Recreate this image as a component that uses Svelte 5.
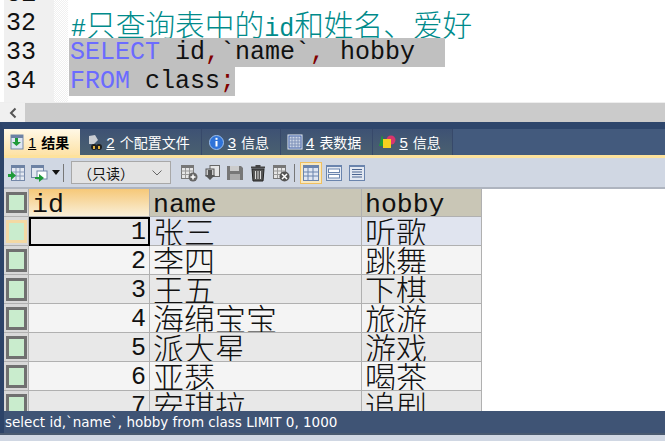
<script>
    const tabs = [
        { num: '1', label: '结果', icon: 'result', active: true },
        { num: '2', label: '个配置文件', icon: 'profile' },
        { num: '3', label: '信息', icon: 'info' },
        { num: '4', label: '表数据', icon: 'table' },
        { num: '5', label: '信息', icon: 'shapes' }
    ];

    const rows = [
        { id: 1, name: '张三', hobby: '听歌' },
        { id: 2, name: '李四', hobby: '跳舞' },
        { id: 3, name: '王五', hobby: '下棋' },
        { id: 4, name: '海绵宝宝', hobby: '旅游' },
        { id: 5, name: '派大星', hobby: '游戏' },
        { id: 6, name: '亚瑟', hobby: '喝茶' },
        { id: 7, name: '安琪拉', hobby: '追剧' }
    ];
</script>

<div class="page">
    <div class="editor">
        <div class="gutter">
            <div class="nums">
                <div>31</div>
                <div>32</div>
                <div>33</div>
                <div>34</div>
            </div>
            <div class="fold"></div>
        </div>
        <div class="code">
            <div class="line"></div>
            <div class="line comment">#<span class="cjk">只查询表中的</span>id<span class="cjk">和姓名、爱好</span></div>
            <div class="line"><span class="sel"><span class="kw">SELECT</span> id<span class="punct">,</span>`name`<span class="punct">,</span> hobby&nbsp;&nbsp;</span></div>
            <div class="line"><span class="sel"><span class="kw">FROM</span> class<span class="punct">;</span></span></div>
        </div>
    </div>

    <div class="hscroll">
        <div class="scroll-btn">
            <svg width="10" height="12" viewBox="0 0 10 12"><path d="M7.500 1.500 3 6l4.500 4.500" fill="none" stroke="#555" stroke-width="2" /></svg>
        </div>
    </div>

    <div class="results">
        <div class="tabs">
            {#each tabs as t}
                <div class="tab" class:active={t.active}>
                    {#if t.icon === 'result'}
                        <svg width="15" height="17" viewBox="0 0 15 17">
                            <rect x="1" y="1" width="12" height="14" fill="#dfe6f2" stroke="#7387a8" />
                            <rect x="1" y="1" width="12" height="3" fill="#6d82a4" />
                            <path d="M5 4h3v4h3l-4.500 4L2 8h3z" fill="#1f9a3a" />
                        </svg>
                    {:else if t.icon === 'profile'}
                        <svg width="17" height="17" viewBox="0 0 17 17">
                            <path d="M3 2 9 1l3 5-4 4H3z" fill="#c9ccd2" />
                            <circle cx="8" cy="13" r="3" fill="#1e1e1e" />
                            <circle cx="13" cy="13" r="3" fill="#1e1e1e" />
                            <rect x="7" y="12" width="2" height="3" fill="#e0b040" />
                            <rect x="12" y="12" width="2" height="3" fill="#e0b040" />
                        </svg>
                    {:else if t.icon === 'info'}
                        <svg width="17" height="17" viewBox="0 0 17 17">
                            <circle cx="8.500" cy="8.500" r="7" fill="#2f73d8" />
                            <circle cx="8.500" cy="8.500" r="7" fill="none" stroke="#9cc0f0" />
                            <rect x="7.500" y="7" width="2" height="5.500" fill="#fff" />
                            <rect x="7.500" y="3.800" width="2" height="2" fill="#fff" />
                        </svg>
                    {:else if t.icon === 'table'}
                        <svg width="16" height="16" viewBox="0 0 16 16">
                            <rect x="1" y="1" width="14" height="14" fill="#cdd6e6" stroke="#e8edf5" />
                            <rect x="2" y="2" width="12" height="12" fill="none" stroke="#3d5fa8" />
                            <path d="M2 5h12M2 8h12M2 11h12M5 2v12M8 2v12M11 2v12" stroke="#7c90b8" />
                        </svg>
                    {:else}
                        <svg width="17" height="14" viewBox="0 0 17 14">
                            <path d="M3 0 6 11H0z" fill="#1f9a3a" />
                            <circle cx="12" cy="5" r="4.500" fill="#d8356e" />
                            <rect x="4" y="4" width="8" height="9" fill="#f5d020" />
                        </svg>
                    {/if}
                    <span class="tab-text"><span class="tab-num">{t.num}</span>{t.label}</span>
                </div>
            {/each}
        </div>

        <div class="toolbar">
            <div class="tool">
                <svg width="18" height="18" viewBox="0 0 18 18">
                    <rect x="3.500" y="1.500" width="13" height="15" fill="#e3e8f1" stroke="#7387a8" />
                    <rect x="3" y="1" width="14" height="3" fill="#6d82a4" />
                    <path d="M3.500 8h13M3.500 12h13M8 4v12M12 4v12" stroke="#8a9bb8" />
                    <path d="M0 10h3V7l5 4.500L3 16v-3H0z" fill="#1f9a3a" />
                </svg>
            </div>
            <div class="tool wide">
                <svg width="18" height="18" viewBox="0 0 18 18">
                    <rect x="1.500" y="1.500" width="12" height="12" fill="#e3e8f1" stroke="#7387a8" />
                    <rect x="1" y="1" width="13" height="3" fill="#6d82a4" />
                    <rect x="7" y="7" width="10" height="8" fill="#fff" stroke="#7387a8" />
                    <path d="M5 13h4v-3l5 4-5 4v-3H5z" fill="#1f9a3a" />
                </svg>
                <svg width="10" height="6" viewBox="0 0 10 6"><path d="M1 0h8L5 5z" fill="#111" /></svg>
            </div>
            <div class="sep"></div>
            <div class="select">
                <span>（只读）</span>
                <svg width="10" height="6" viewBox="0 0 10 6"><path d="M.5.500 5 5 9.500.500" fill="none" stroke="#666" /></svg>
            </div>
            <div class="tool after-select">
                <svg width="18" height="18" viewBox="0 0 18 18">
                    <rect x="1.500" y="1.500" width="12" height="13" fill="#e6e6e6" stroke="#777" />
                    <rect x="1" y="1" width="13" height="3" fill="#777" />
                    <path d="M1.500 7h12M1.500 10.500h12M5.500 4v10M9.500 4v10" stroke="#999" />
                    <circle cx="13" cy="13" r="4.500" fill="#666" />
                    <path d="M10.500 13h5M13 10.500v5" stroke="#fff" stroke-width="1.500" />
                </svg>
            </div>
            <div class="tool">
                <svg width="18" height="18" viewBox="0 0 18 18">
                    <rect x="7" y="1.500" width="9.500" height="11" fill="#e6e6e6" stroke="#666" />
                    <rect x="3" y="5" width="8" height="7" fill="#ccc" stroke="#555" />
                    <path d="M5 6h4v5h3l-5 5-5-5h3z" fill="#555" />
                </svg>
            </div>
            <div class="tool">
                <svg width="18" height="18" viewBox="0 0 18 18">
                    <path d="M1 2h14l2 2v12H1z" fill="#777" />
                    <rect x="4" y="2" width="9" height="5" fill="#ccc" />
                    <rect x="4" y="10" width="10" height="6" fill="#aaa" />
                </svg>
            </div>
            <div class="tool">
                <svg width="18" height="18" viewBox="0 0 18 18">
                    <path d="M3 5h12l-1 12H4z" fill="#555" stroke="#222" />
                    <path d="M6.500 7v8M9 7v8M11.500 7v8" stroke="#ddd" />
                    <rect x="2" y="2.500" width="14" height="2" fill="#444" />
                    <rect x="6.500" y="1" width="5" height="2" fill="#444" />
                </svg>
            </div>
            <div class="tool">
                <svg width="18" height="18" viewBox="0 0 18 18">
                    <rect x="1.500" y="1.500" width="12" height="13" fill="#e6e6e6" stroke="#777" />
                    <rect x="1" y="1" width="13" height="3" fill="#777" />
                    <path d="M1.500 7h12M1.500 10.500h12M5.500 4v10M9.500 4v10" stroke="#999" />
                    <circle cx="12.500" cy="12.500" r="5" fill="#555" />
                    <path d="m10 10 5 5M15 10l-5 5" stroke="#fff" stroke-width="1.500" />
                </svg>
            </div>
            <div class="sep tight"></div>
            <div class="tool view on">
                <svg width="18" height="18" viewBox="0 0 18 18">
                    <rect x="1.500" y="1.500" width="15" height="15" fill="#dfe6f2" stroke="#6a84ad" />
                    <rect x="1" y="1" width="16" height="3" fill="#6a84ad" />
                    <path d="M1.500 8h15M1.500 12h15M6 4v12M11 4v12" stroke="#6a84ad" />
                </svg>
            </div>
            <div class="tool view">
                <svg width="16" height="16" viewBox="0 0 16 16">
                    <rect x=".5" y=".5" width="15" height="15" fill="#e3e8f1" stroke="#6a84ad" />
                    <rect x="0" y="0" width="16" height="2" fill="#6a84ad" />
                    <rect x="2.500" y="4" width="11" height="3.500" fill="#fff" stroke="#6a84ad" />
                    <rect x="2.500" y="9.500" width="11" height="3.500" fill="#fff" stroke="#6a84ad" />
                </svg>
            </div>
            <div class="tool view">
                <svg width="16" height="16" viewBox="0 0 16 16">
                    <rect x=".5" y=".5" width="15" height="15" fill="#e3e8f1" stroke="#6a84ad" />
                    <rect x="0" y="0" width="16" height="2" fill="#6a84ad" />
                    <path d="M3 4.500h10M3 7h10M3 9.500h10M3 12h10" stroke="#4a6490" />
                </svg>
            </div>
        </div>

        <div class="grid">
            <div class="row head">
                <div class="rowhead"><span class="box"></span></div>
                <div class="cell h sorted">id</div>
                <div class="cell h">name</div>
                <div class="cell h">hobby</div>
            </div>
            {#each rows as r, i}
                <div class="row" class:light={i % 2 === 1} class:current={i === 0}>
                    <div class="rowhead"><span class="box" class:cur={i === 0}></span></div>
                    <div class="cell num" class:focus={i === 0}>{r.id}</div>
                    <div class="cell zh">{r.name}</div>
                    <div class="cell zh">{r.hobby}</div>
                </div>
            {/each}
        </div>

        <div class="status">select id,`name`, hobby from class LIMIT 0, 1000</div>
    </div>
    <div class="bottom"></div>
</div>

<style>
    :global(body) {
        margin: 0;
        background: #fff;
    }

    .page {
        width: 665px;
        height: 441px;
        overflow: hidden;
        display: flex;
        flex-direction: column;
        font-family: "Liberation Mono", monospace;
    }

    .editor {
        height: 102px;
        display: flex;
        background: #fff;
        overflow: hidden;
        flex: none;
    }

    .gutter {
        display: flex;
        padding-left: 4px;
        flex: none;
    }

    .nums {
        width: 50px;
        background: #f0f0f0;
        color: #111;
        font-size: 25px;
        line-height: 29px;
        padding: 0 0 0 2px;
        box-sizing: border-box;
    }

    .nums div {
        height: 29px;
    }

    .nums div:first-child {
        margin-top: -20px;
    }

    .fold {
        width: 14px;
        background: repeating-conic-gradient(#f0f0f0 0 25%, #fff 0 50%) 0 0 / 2px 2px;
    }

    .code {
        margin-top: -20px;
        padding-left: 1px;
        font-size: 25px;
        line-height: 29px;
        color: #111;
    }

    .line {
        height: 29px;
        white-space: pre;
    }

    .comment {
        color: #008b8b;
        padding-left: 2px;
    }

    .cjk {
        font-family: "Noto Sans CJK SC", sans-serif;
        font-size: 29.700px;
        font-weight: 300;
        line-height: 29px;
    }

    .sel {
        display: inline-block;
        height: 29px;
        background: #c0c0c0;
        padding-left: 1px;
    }

    .kw {
        color: #6b6bff;
    }

    .punct {
        color: #800000;
    }

    .hscroll {
        height: 20px;
        flex: none;
        background: #cbcbcb;
        border-top: 1px solid #eee;
        box-sizing: border-box;
    }

    .scroll-btn {
        width: 25px;
        height: 100%;
        background: #f0f0f0;
        display: flex;
        align-items: center;
        justify-content: center;
    }

    .results {
        flex: 1;
        min-height: 0;
        display: flex;
        flex-direction: column;
        background: #fff;
        border-left: 4px solid #2c4368;
        border-top: 7px solid #2e466c;
    }

    .tabs {
        height: 26px;
        flex: none;
        display: flex;
        background: #435a7d;
        border-bottom: 3px solid #fde29c;
    }

    .tab {
        display: flex;
        align-items: center;
        gap: 3px;
        padding: 0 11px 0 6px;
        color: #fff;
        background: linear-gradient(#3e5274, #4a6070);
        border-right: 1px solid #37496a;
    }

    .tab.active {
        color: #000;
        background: linear-gradient(#fff8e6, #fde2a6);
        border-right: none;
    }

    .tab-text {
        font-family: "Noto Sans CJK SC", sans-serif;
        font-size: 14px;
        white-space: nowrap;
    }

    .tab.active .tab-text {
        font-weight: 700;
    }

    .tab-num {
        font-family: "Liberation Sans", sans-serif;
        font-weight: 400;
        font-size: 15px;
        text-decoration: underline;
        margin-right: 5px;
    }

    .toolbar {
        height: 31px;
        flex: none;
        display: flex;
        align-items: center;
        background: #d0d7e3;
        border-bottom: 2px solid #aeb4bf;
        box-sizing: border-box;
        padding-left: 3px;
    }

    .tool {
        width: 19px;
        height: 22px;
        display: flex;
        align-items: center;
        justify-content: center;
        margin-right: 4px;
    }

    .tool.wide {
        width: 31px;
        gap: 3px;
        margin-right: 0;
    }

    .tool.after-select {
        margin-left: 8px;
    }

    .tool.view {
        width: 22px;
        margin-right: 1px;
        box-sizing: border-box;
    }

    .tool.view.on {
        border: 1px solid #f0c060;
        background: #f7e8c0;
    }

    .sep {
        width: 1px;
        height: 18px;
        background: #777;
        margin: 0 7px 0 2px;
    }

    .sep.tight {
        margin: 0 5px 0 0;
    }

    .select {
        width: 100px;
        height: 23px;
        box-sizing: border-box;
        border: 1px solid #a8a8a8;
        background: #e3e3e3;
        display: flex;
        align-items: center;
        justify-content: space-between;
        padding: 0 8px 0 6px;
        font-family: "Noto Sans CJK SC", sans-serif;
        font-size: 14px;
        color: #111;
    }

    .grid {
        flex: 1;
        min-height: 0;
        overflow: hidden;
    }

    .row {
        display: grid;
        grid-template-columns: 25px 121px 212px 120px;
        width: 478px;
        height: 29px;
        background: #e8e8e8;
    }

    .row.head {
        height: 28px;
    }

    .row.light {
        background: #f4f4f4;
    }

    .row.current {
        background: #e0e4ef;
    }

    .rowhead {
        background: #d8d8d8;
        border-right: 1px solid #b0b0b0;
        border-bottom: 1px solid #b0b0b0;
        display: flex;
        align-items: center;
        justify-content: center;
    }

    .box {
        width: 21px;
        height: 23px;
        box-sizing: border-box;
        background: #c9eccd;
        border: 3px solid #707070;
    }

    .head .box {
        height: 21px;
    }

    .box.cur {
        border-color: #f3d9a4;
    }

    .cell {
        border-right: 1px solid #b0b0b0;
        border-bottom: 1px solid #b0b0b0;
        box-sizing: border-box;
        padding: 0 3px;
        font-size: 25px;
        line-height: 32px;
        color: #111;
        overflow: hidden;
        white-space: nowrap;
    }

    .cell.h {
        background: #c9c6b6;
        font-size: 26.500px;
    }

    .cell.sorted {
        background: linear-gradient(#f6c878, #f9efd8);
    }

    .cell.zh {
        font-family: "Noto Sans CJK SC", sans-serif;
        font-size: 31px;
        font-weight: 300;
        line-height: 28px;
    }

    .cell.num {
        text-align: right;
    }

    .cell.focus {
        border: 2px solid #000;
        background: #e8e8e8;
        line-height: 28px;
        padding-right: 2px;
    }

    .status {
        height: 22px;
        flex: none;
        background: #3f5475;
        color: #fff;
        font-family: "DejaVu Sans", sans-serif;
        font-size: 13.500px;
        line-height: 22px;
        padding-left: 1px;
        white-space: nowrap;
    }

    .bottom {
        height: 8px;
        flex: none;
        background: #d0d7e3;
        border-top: 2px solid #4a5a70;
        box-sizing: border-box;
    }
</style>
